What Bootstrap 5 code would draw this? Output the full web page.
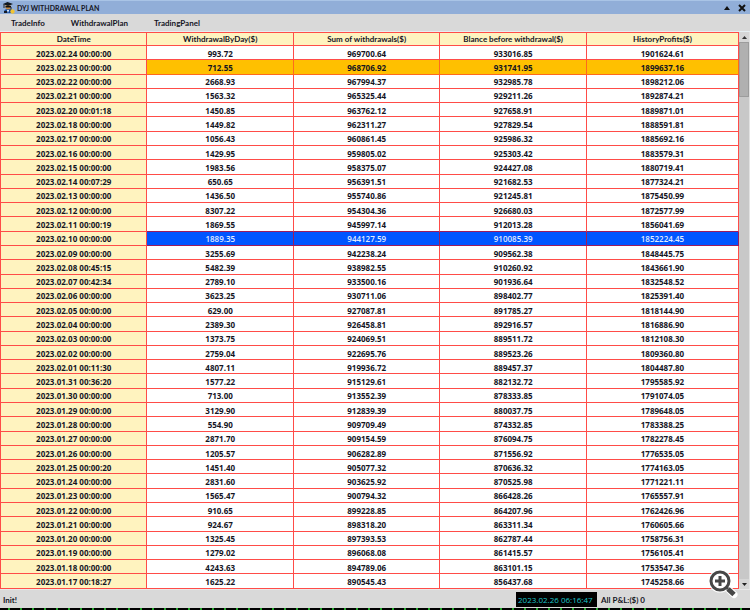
<!DOCTYPE html>
<html lang="en">
<head>
<meta charset="utf-8">
<meta name="viewport" content="width=device-width, initial-scale=1">
<title>DYJ WITHDRAWAL PLAN</title>
<link rel="stylesheet" href="https://cdn.jsdelivr.net/npm/bootstrap@5.3.0/dist/css/bootstrap.min.css">
<style>
body{font:700 8px/12px Lato,"Open Sans",sans-serif;color:#15151f;background:#d9d9d9}
button{font:inherit;color:inherit;background:none;border:0;padding:0}
.titlebar{height:14px;background:#91aed8;border-top:1px solid #a9c4e6;padding:0 4px 0 3px}
.titlebar h1{font:inherit;font-size:7px;margin:0 0 0 2px}
.titlebar svg,.scroller svg{display:block}
.menubar{height:18px;padding:0 11px;gap:26px;border-bottom:1px solid #e6eff2}
.plan{height:100%;table-layout:fixed;border-collapse:separate;border-spacing:0;border:solid #ff4c48;border-width:1px 0 0 1px;background:#fff;font-family:"Open Sans",sans-serif;line-height:11px;text-align:center}
.plan th,.plan td{border:solid #ff4c48;border-width:0 1px 1px 0;padding:1px 0 0}
.plan th{background:#fff3bf;text-align:center}
.plan thead th{font-family:Lato,sans-serif}
.plan col{width:19.85%}
.plan col:last-child{width:auto}
.plan tr.marked td{background:#ffc000;border-color:#ff6a1c}
.plan tr.picked td{background:#0055ff;color:#e4edff;border-color:#9c1c5c;font-weight:600}
.plan tr.before-picked td{border-bottom-color:#9c1c5c}
.scroller{width:11px;background:#c8c8c8;border-right:1px solid #e2e2e2}
.scroller button{height:10px;background:#d6d6d6;display:grid;place-items:center}
.thumb{height:55px;background:#b0b0b0;border:1px solid #9c9c9c}
.statusbar{height:19px;border-top:1px solid #e8e8e8;padding:1px 3px 0}
.statusbar .right{width:231px}
.clock{width:81px;height:15px;background:#000;color:#1cc5ca;font-family:"Open Sans",sans-serif;font-weight:400;line-height:16px;padding-left:2px}
.ticks{height:2px;background:repeating-linear-gradient(90deg,#000 0 8px,#24a52c 8px 10px,#000 10px 12px)}
.zoomer{position:absolute;right:12px;bottom:11px}
.zoomer svg{display:block}
</style>
<script src="https://cdn.jsdelivr.net/npm/bootstrap@5.3.0/dist/js/bootstrap.bundle.min.js"></script>
</head>
<body>
<div class="d-flex flex-column vh-100 position-relative overflow-hidden">
<header class="titlebar d-flex align-items-center">
<svg width="12" height="12" viewBox="0 0 12 12" aria-hidden="true"><path d="M1 10Q1 7 5 7Q9 7 10 11H1Z" fill="#124a9b"/><path d="M2.5 3H7.5V6Q5 9 2.5 6Z" fill="#c88b43"/><path d="M0 2L4.5 0L10 2L5 4Z" fill="#101820"/><path d="M2.5 4H8V5.5H2.5Z" fill="#111"/><path d="M1 2V6M8 5V8" stroke="#222"/><path d="M1 9H4V11H1Z" fill="#171b25"/><circle cx="9.5" cy="9.5" r="2.2" fill="#f1c332"/><path d="M4 8L5 11L6 8Z" fill="#fff"/></svg>
<h1 class="flex-grow-1">DYJ WITHDRAWAL PLAN</h1>
<div class="d-flex align-items-center gap-2">
<button type="button" aria-label="Collapse"><svg width="6" height="4" viewBox="0 0 6 4"><path d="M0 4L3 0L6 4Z" fill="#111"/></svg></button>
<button type="button" aria-label="Close"><svg width="8" height="8" viewBox="0 0 8 8"><path d="M1 1L7 7M7 1L1 7" stroke="#111" stroke-width="2"/></svg></button>
</div>
</header>
<nav class="menubar d-flex align-items-center" aria-label="Main">
<button type="button">TradeInfo</button><button type="button">WithdrawalPlan</button><button type="button">TradingPanel</button>
</nav>
<main class="d-flex flex-grow-1">
<div class="flex-grow-1">
<table class="plan w-100">
<colgroup><col><col><col><col><col></colgroup>
<thead><tr><th scope="col">DateTime</th><th scope="col">WithdrawalByDay($)</th><th scope="col">Sum of withdrawals($)</th><th scope="col">Blance before withdrawal($)</th><th scope="col">HistoryProfits($)</th></tr></thead>
<tbody id="rows"></tbody>
</table>
</div>
<div class="scroller d-flex flex-column flex-shrink-0">
<button type="button" aria-label="Scroll up"><svg width="5" height="3" viewBox="0 0 5 3"><path d="M0 3L2.5 0L5 3Z" fill="#333"/></svg></button>
<div class="thumb"></div>
<button type="button" class="mt-auto" aria-label="Scroll down"><svg width="5" height="3" viewBox="0 0 5 3"><path d="M0 0L2.5 3L5 0Z" fill="#222"/></svg></button>
</div>
</main>
<footer>
<div class="statusbar d-flex align-items-center justify-content-between">
<span>Init!</span>
<div class="right d-flex align-items-center gap-1"><time class="clock">2023.02.26 06:16:47</time><span>All P&amp;L:($) 0</span></div>
</div>
<div class="ticks"></div>
</footer>
<button type="button" class="zoomer" aria-label="Zoom in"><svg width="30" height="30" viewBox="0 0 30 30" fill="none"><path d="M17 17L26 25.500" stroke="#fff" stroke-width="7" stroke-linecap="round"/><circle cx="12" cy="12" r="9.500" fill="#fff" stroke="#fff" stroke-width="4"/><circle cx="12" cy="12" r="9" stroke="#474747" stroke-width="3"/><path d="M7 12H17M12 7V17" stroke="#474747" stroke-width="3"/><path d="M18 18L20 20" stroke="#474747" stroke-width="3"/><path d="M20 20L26 25.500" stroke="#474747" stroke-width="5"/></svg></button>
</div>
<script>
const data = `2023.02.24 00:00:00|993.72|969700.64|933016.85|1901624.61
2023.02.23 00:00:00|712.55|968706.92|931741.95|1899637.16
2023.02.22 00:00:00|2668.93|967994.37|932985.78|1898212.06
2023.02.21 00:00:00|1563.32|965325.44|929211.26|1892874.21
2023.02.20 00:01:18|1450.85|963762.12|927658.91|1889871.01
2023.02.18 00:00:00|1449.82|962311.27|927829.54|1888591.81
2023.02.17 00:00:00|1056.43|960861.45|925986.32|1885692.16
2023.02.16 00:00:00|1429.95|959805.02|925303.42|1883579.31
2023.02.15 00:00:00|1983.56|958375.07|924427.08|1880719.41
2023.02.14 00:07:29|650.65|956391.51|921682.53|1877324.21
2023.02.13 00:00:00|1436.50|955740.86|921245.81|1875450.99
2023.02.12 00:00:00|8307.22|954304.36|926680.03|1872577.99
2023.02.11 00:00:19|1869.55|945997.14|912013.28|1856041.69
2023.02.10 00:00:00|1889.35|944127.59|910085.39|1852224.45
2023.02.09 00:00:00|3255.69|942238.24|909562.38|1848445.75
2023.02.08 00:45:15|5482.39|938982.55|910260.92|1843661.90
2023.02.07 00:42:34|2789.10|933500.16|901936.64|1832548.52
2023.02.06 00:00:00|3623.25|930711.06|898402.77|1825391.40
2023.02.05 00:00:00|629.00|927087.81|891785.27|1818144.90
2023.02.04 00:00:00|2389.30|926458.81|892916.57|1816886.90
2023.02.03 00:00:00|1373.75|924069.51|889511.72|1812108.30
2023.02.02 00:00:00|2759.04|922695.76|889523.26|1809360.80
2023.02.01 00:11:30|4807.11|919936.72|889457.37|1804487.80
2023.01.31 00:36:20|1577.22|915129.61|882132.72|1795585.92
2023.01.30 00:00:00|713.00|913552.39|878333.85|1791074.05
2023.01.29 00:00:00|3129.90|912839.39|880037.75|1789648.05
2023.01.28 00:00:00|554.90|909709.49|874332.85|1783388.25
2023.01.27 00:00:00|2871.70|909154.59|876094.75|1782278.45
2023.01.26 00:00:00|1205.57|906282.89|871556.92|1776535.05
2023.01.25 00:00:20|1451.40|905077.32|870636.32|1774163.05
2023.01.24 00:00:00|2831.60|903625.92|870525.98|1771221.11
2023.01.23 00:00:00|1565.47|900794.32|866428.26|1765557.91
2023.01.22 00:00:00|910.65|899228.85|864207.96|1762426.96
2023.01.21 00:00:00|924.67|898318.20|863311.34|1760605.66
2023.01.20 00:00:00|1325.45|897393.53|862787.44|1758756.31
2023.01.19 00:00:00|1279.02|896068.08|861415.57|1756105.41
2023.01.18 00:00:00|4243.63|894789.06|863101.15|1753547.36
2023.01.17 00:18:27|1625.22|890545.43|856437.68|1745258.66`;
const state = {"2023.02.23 00:00:00": "marked", "2023.02.11 00:00:19": "before-picked", "2023.02.10 00:00:00": "picked"};
document.getElementById("rows").innerHTML = data.split("\n").map(line => {
  const [date, ...nums] = line.split("|");
  return `<tr class="${state[date] || ""}"><th scope="row">${date}</th>${nums.map(n => `<td>${n}</td>`).join("")}</tr>`;
}).join("");
</script>
</body>
</html>
